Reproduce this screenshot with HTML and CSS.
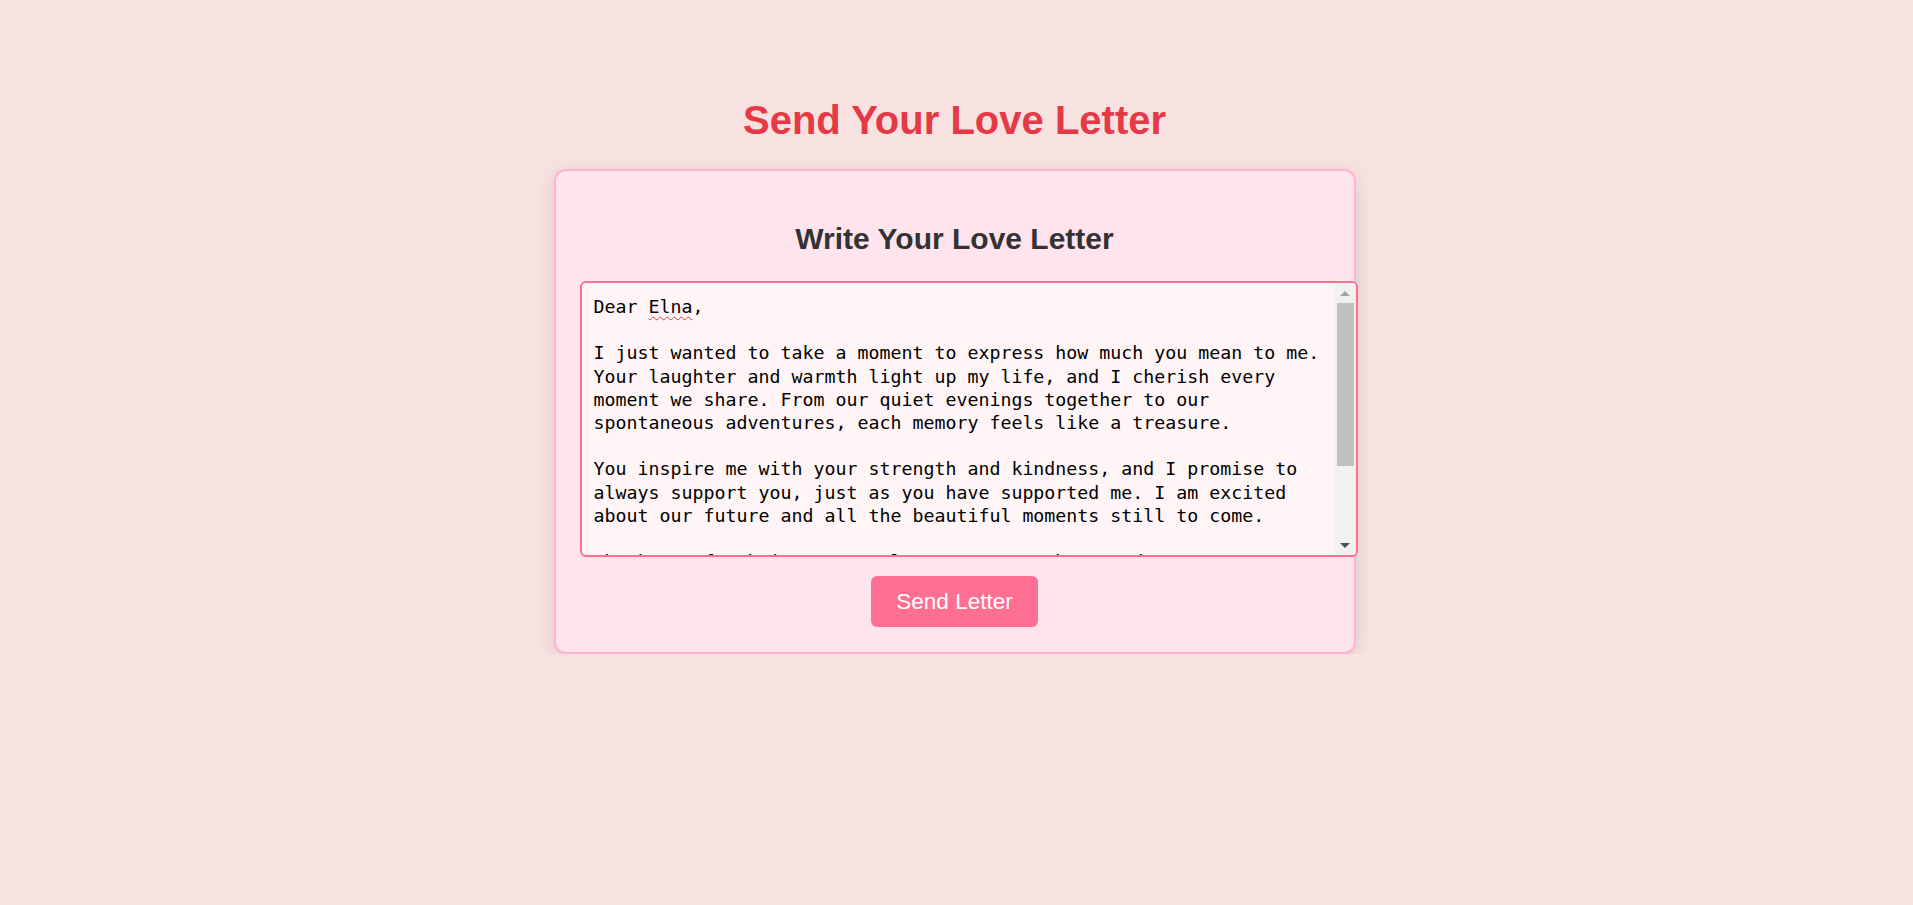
FILE: index.html
```html
<!DOCTYPE html>
<html lang="en">
<head>
<meta charset="utf-8">
<title>Send Your Love Letter</title>
<link rel="stylesheet" href="styles.css">
</head>
<body>
<main class="page">
  <h1 class="page-title">Send Your Love Letter</h1>
  <section class="card">
    <h2 class="card-title">Write Your Love Letter</h2>
    <div class="letter-box">
      <div class="letter-text" role="textbox" aria-multiline="true" contenteditable="true" spellcheck="false">Dear <span class="misspelled">Elna</span>,

I just wanted to take a moment to express how much you mean to me. Your laughter and warmth light up my life, and I cherish every moment we share. From our quiet evenings together to our spontaneous adventures, each memory feels like a treasure.

You inspire me with your strength and kindness, and I promise to always support you, just as you have supported me. I am excited about our future and all the beautiful moments still to come.

Thank you for being you. I love you more than words can say.

With all my love,
Forever yours</div>
      <div class="scrollbar" aria-hidden="true">
        <div class="sb-btn sb-up"><span class="tri tri-up"></span></div>
        <div class="sb-track">
          <div class="sb-thumb"></div>
        </div>
        <div class="sb-btn sb-down"><span class="tri tri-down"></span></div>
      </div>
    </div>
    <button class="send-btn" type="button">Send Letter</button>
  </section>
</main>
</body>
</html>
```
FILE: styles.css
```css
html, body {
  margin: 0;
  padding: 0;
}

body {
  background: #f7e1e1;
  font-family: "Liberation Sans", Arial, sans-serif;
  padding-right: 4px;
}

.page {
  display: flex;
  flex-direction: column;
  align-items: center;
  padding-top: 96.5px;
}

.page-title {
  margin: 0 0 26.5px;
  font-size: 40px;
  font-weight: 700;
  line-height: 46px;
  color: #e63946;
}

.card {
  width: 750px;
  padding: 24px 24px 25px;
  background: #ffe4ee;
  border: 2px solid #ffb3d3;
  border-radius: 12px;
  box-shadow: 0 5px 20px rgba(0, 0, 0, 0.11);
  display: flex;
  flex-direction: column;
  align-items: center;
}

.card-title {
  margin: 26.5px 0 25px;
  font-size: 30px;
  font-weight: 700;
  line-height: 34.5px;
  color: #333333;
}

.letter-box {
  box-sizing: border-box;
  align-self: flex-start;
  width: 778px;
  height: 276px;
  margin: 0 0 19px;
  border: 2px solid #ff6f91;
  border-radius: 6px;
  background: #fff5f7;
  display: flex;
  overflow: hidden;
}

.letter-text {
  flex: 1;
  min-width: 0;
  padding: 12px;
  color: #000;
  font-family: "DejaVu Sans Mono", "Liberation Mono", monospace;
  font-size: 18.27px;
  line-height: 23.2px;
  white-space: pre-wrap;
  overflow: hidden;
  outline: none;
}

.misspelled {
  text-decoration: underline wavy #e53935;
  text-decoration-thickness: 1px;
  text-underline-offset: 3px;
}

.scrollbar {
  width: 21px;
  flex: none;
  background: #f1f1f1;
  display: flex;
  flex-direction: column;
}

.sb-btn {
  height: 20px;
  flex: none;
  display: flex;
  align-items: center;
  justify-content: center;
}

.sb-track {
  flex: 1;
  padding: 0 2px;
}

.sb-thumb {
  height: 163px;
  background: #c1c1c1;
}

.tri {
  width: 0;
  height: 0;
  border-left: 5px solid transparent;
  border-right: 5px solid transparent;
}

.tri-up {
  border-bottom: 5px solid #a3a3a3;
}

.tri-down {
  border-top: 5px solid #505050;
}

.send-btn {
  padding: 12.5px 25px;
  border: none;
  border-radius: 6px;
  background: #ff6f91;
  color: #ffffff;
  font-family: "Liberation Sans", Arial, sans-serif;
  font-size: 22.5px;
  line-height: 26px;
  cursor: pointer;
}
```
